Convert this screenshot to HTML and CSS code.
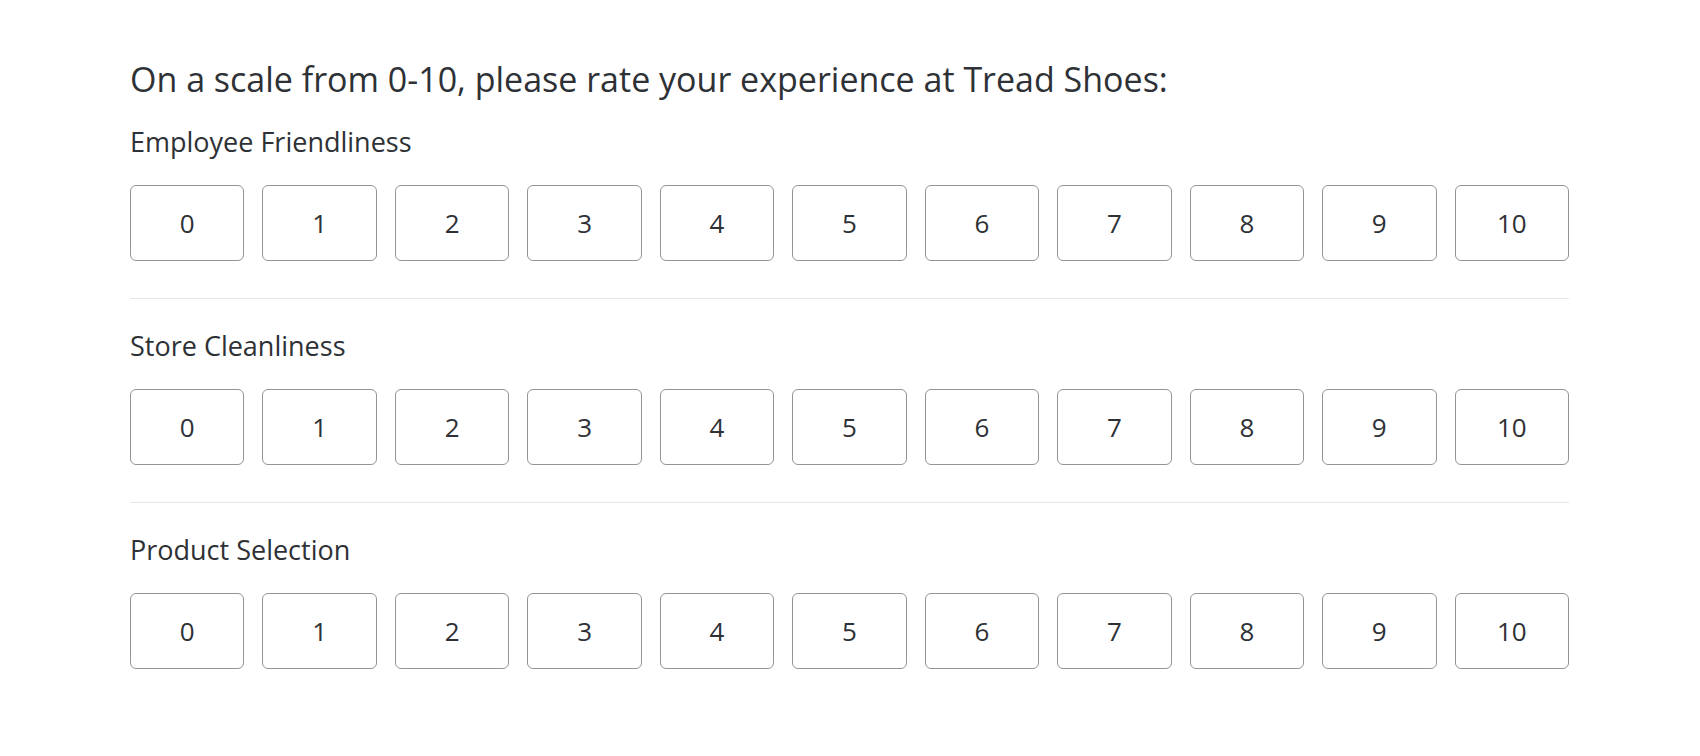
FILE: index.html
```html
<!DOCTYPE html>
<html lang="en">
<head>
  <meta charset="UTF-8" />
  <title>Tread Shoes Survey</title>
  <link rel="stylesheet" href="styles.css">
</head>
<body>
  <div class="survey">

    <h1 class="question">On a scale from 0-10, please rate your experience at Tread Shoes:</h1>

    <!-- Employee Friendliness -->
    <div class="statement">
      <div class="statement-label">Employee Friendliness</div>
      <div class="scale">
        <button class="scale-option">0</button>
        <button class="scale-option">1</button>
        <button class="scale-option">2</button>
        <button class="scale-option">3</button>
        <button class="scale-option">4</button>
        <button class="scale-option">5</button>
        <button class="scale-option">6</button>
        <button class="scale-option">7</button>
        <button class="scale-option">8</button>
        <button class="scale-option">9</button>
        <button class="scale-option">10</button>
      </div>
    </div>

    <!-- Store Cleanliness -->
    <div class="statement">
      <div class="statement-label">Store Cleanliness</div>
      <div class="scale">
        <button class="scale-option">0</button>
        <button class="scale-option">1</button>
        <button class="scale-option">2</button>
        <button class="scale-option">3</button>
        <button class="scale-option">4</button>
        <button class="scale-option">5</button>
        <button class="scale-option">6</button>
        <button class="scale-option">7</button>
        <button class="scale-option">8</button>
        <button class="scale-option">9</button>
        <button class="scale-option">10</button>
      </div>
    </div>

    <!-- Product Selection -->
    <div class="statement">
      <div class="statement-label">Product Selection</div>
      <div class="scale">
        <button class="scale-option">0</button>
        <button class="scale-option">1</button>
        <button class="scale-option">2</button>
        <button class="scale-option">3</button>
        <button class="scale-option">4</button>
        <button class="scale-option">5</button>
        <button class="scale-option">6</button>
        <button class="scale-option">7</button>
        <button class="scale-option">8</button>
        <button class="scale-option">9</button>
        <button class="scale-option">10</button>
      </div>
    </div>

  </div>
</body>
</html>
```

FILE: styles.css
```css
:root {
  --text-color: #2e3135;
  --border-color: #959595;
  --divider-color: #e6e6e6;
}

* {
  box-sizing: border-box;
}

body {
  margin: 0;
  background: #fff;
  color: var(--text-color);
  font-family: 'Open Sans', 'Noto Sans', sans-serif;
}

.survey {
  width: 1439px;
  margin-left: 130px;
  padding-top: 60px;
}

.question {
  margin: 0;
  font-size: 34px;
  line-height: 39.6px;
  font-weight: 400;
}

.statement {
  padding: 31px 0 37px;
  border-bottom: 1px solid var(--divider-color);
}

.statement:first-of-type {
  padding-top: 26px;
}

.statement:last-child {
  border-bottom: none;
}

.statement-label {
  font-size: 27px;
  line-height: 31px;
}

.scale {
  display: flex;
  gap: 18px;
  margin-top: 28px;
}

.scale-option {
  flex: 1;
  height: 76px;
  padding: 0;
  background: #fff;
  border: 1px solid var(--border-color);
  border-radius: 6px;
  font-family: inherit;
  font-size: 26px;
  color: var(--text-color);
  cursor: pointer;
}
```
